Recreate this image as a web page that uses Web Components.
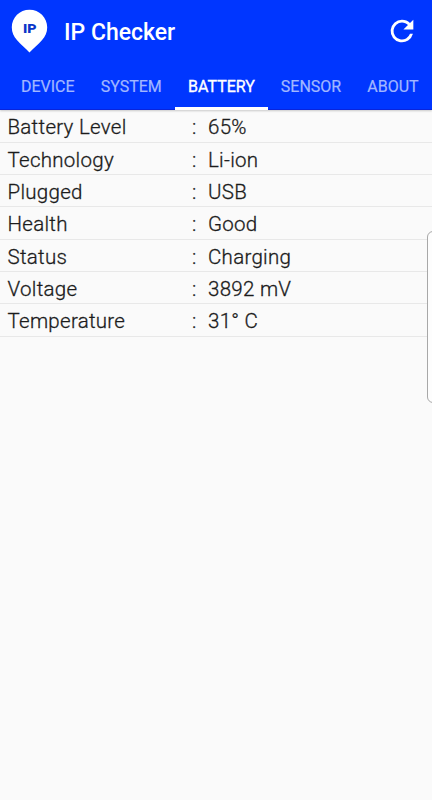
<!DOCTYPE html>
<html lang="en">
<head>
<meta charset="utf-8">
<title>IP Checker</title>
<style>
  body {
    margin: 0;
    height: 800px;
    overflow: hidden;
    background: #fafafa;
    font-family: Roboto, sans-serif;
  }
</style>
</head>
<body>
<checker-app>
  <app-header slot="header">IP Checker</app-header>
  <tab-bar slot="header">
    <tab-item style="width: 79.5px">DEVICE</tab-item>
    <tab-item style="width: 87.5px">SYSTEM</tab-item>
    <tab-item style="width: 93px" active>BATTERY</tab-item>
    <tab-item style="width: 86px">SENSOR</tab-item>
    <tab-item style="width: 78px">ABOUT</tab-item>
  </tab-bar>
  <info-row label="Battery Level">65%</info-row>
  <info-row label="Technology">Li-ion</info-row>
  <info-row label="Plugged">USB</info-row>
  <info-row label="Health">Good</info-row>
  <info-row label="Status">Charging</info-row>
  <info-row label="Voltage">3892 mV</info-row>
  <info-row label="Temperature">31° C</info-row>
</checker-app>

<script>
function attach(element, html) {
  const template = document.createElement("template");
  template.innerHTML = html;
  element.attachShadow({ mode: "open" });
  element.shadowRoot.appendChild(template.content.cloneNode(true));
}

class CheckerApp extends HTMLElement {
  constructor() {
    super();
    attach(this, `
      <style>
        :host {
          display: block;
          position: relative;
          height: 800px;
          overflow: hidden;
        }
        header {
          height: 110px;
          background: #0036ff;
          box-shadow: inset 0 -1px 0 #0924dc, 0 1px 2px rgba(0, 0, 0, 0.2);
        }
        main {
          padding-top: 0.4px;
        }
        .edge--handle {
          position: absolute;
          left: 427px;
          top: 231px;
          width: 20px;
          height: 170px;
          border: 1px solid #a8a8a8;
          border-radius: 6px;
          background: #fdfdfd;
        }
      </style>
      <header><slot name="header"></slot></header>
      <main><slot></slot></main>
      <div class="edge--handle"></div>
    `);
  }
}
customElements.define("checker-app", CheckerApp);

class AppHeader extends HTMLElement {
  constructor() {
    super();
    attach(this, `
      <style>
        :host {
          display: flex;
          align-items: center;
          height: 63px;
          color: #fff;
        }
        .logo {
          margin-left: 11px;
          margin-bottom: 1px;
          flex: none;
        }
        h1 {
          flex: 1;
          margin: 2px 0 0 16px;
          font-size: 23px;
          font-weight: 500;
          line-height: 28px;
        }
        .refresh {
          flex: none;
          margin-right: 13px;
          margin-bottom: 2px;
        }
      </style>
      <svg class="logo" width="37" height="45" viewBox="0 0 37 45">
        <path fill="#fff" d="M18.5 .8C8.7.8.8 8.6.8 18.3c0 5.4 1.9 9.1 5.1 12.8 3.8 4.4 8.4 8.2 12.6 12.4 4.2-4.2 8.8-8 12.6-12.4 3.2-3.7 5.1-7.4 5.1-12.8C36.2 8.6 28.3.8 18.5.8z"/>
        <text x="12" y="24" font-size="13.5" font-weight="900" fill="#0a35c8" textLength="13.6" lengthAdjust="spacingAndGlyphs">IP</text>
      </svg>
      <h1><slot></slot></h1>
      <svg class="refresh" width="34" height="34" viewBox="0 0 24 24">
        <path fill="#fff" d="M17.65 6.35A7.96 7.96 0 0 0 12 4a8 8 0 1 0 7.73 10h-2.08A6 6 0 1 1 12 6c1.66 0 3.14.69 4.22 1.78L13 11h7V4z"/>
      </svg>
    `);
  }
}
customElements.define("app-header", AppHeader);

class TabBar extends HTMLElement {
  constructor() {
    super();
    attach(this, `
      <style>
        :host {
          display: flex;
          height: 47px;
          padding-left: 8px;
        }
      </style>
      <slot></slot>
    `);
  }
}
customElements.define("tab-bar", TabBar);

class TabItem extends HTMLElement {
  constructor() {
    super();
    attach(this, `
      <style>
        :host {
          display: flex;
          justify-content: center;
          box-sizing: border-box;
          flex: none;
          padding-top: 14px;
          border-bottom: 3px solid transparent;
          font-size: 16px;
          font-weight: 400;
          line-height: 20px;
          color: #a2b7ff;
          -webkit-text-stroke: 0.2px;
        }
        :host([active]) {
          color: #fff;
          border-bottom-color: #fff;
          -webkit-text-stroke: 0.35px;
        }
      </style>
      <slot></slot>
    `);
  }
}
customElements.define("tab-item", TabItem);

class InfoRow extends HTMLElement {
  constructor() {
    super();
    attach(this, `
      <style>
        :host {
          display: grid;
          grid-template-columns: 184.5px 16px 1fr;
          box-sizing: border-box;
          height: 32.35px;
          padding: 5px 0 0 7.5px;
          border-bottom: 1px solid #e8e8e8;
          font-size: 20.5px;
          font-weight: 300;
          line-height: 24px;
          letter-spacing: 0.28px;
          color: #1c1c1c;
          -webkit-text-stroke: 0.3px;
        }
      </style>
      <span class="label"></span>
      <span>:</span>
      <span><slot></slot></span>
    `);
    this.shadowRoot.querySelector(".label").textContent = this.getAttribute("label");
  }
}
customElements.define("info-row", InfoRow);
</script>
</body>
</html>
